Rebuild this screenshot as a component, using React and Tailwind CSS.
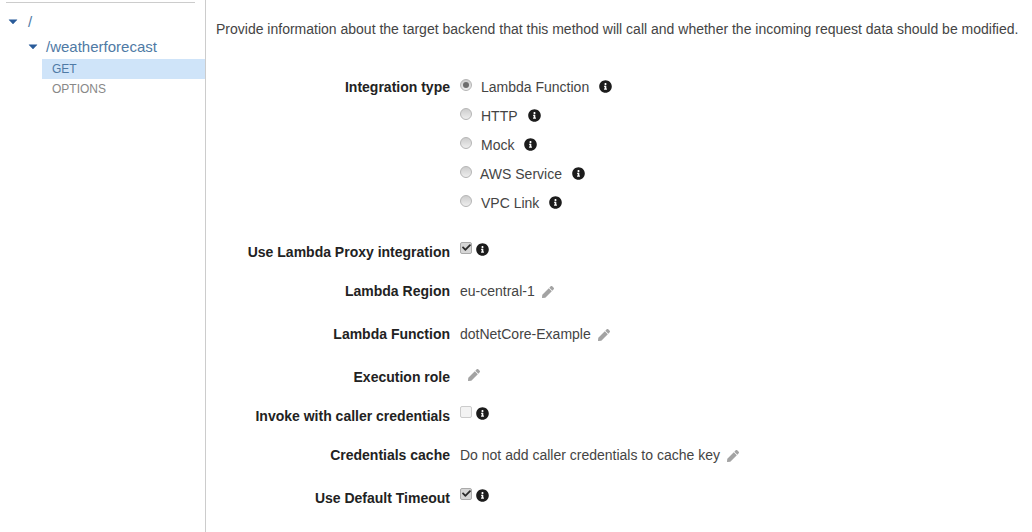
import { FaInfoCircle, FaPen, FaCheck } from "react-icons/fa";

const integrationTypes = [
    { label: "Lambda Function", textMargin: "ml-[9px]" },
    { label: "HTTP", textMargin: "ml-[9px]" },
    { label: "Mock", textMargin: "ml-[9px]" },
    { label: "AWS Service", textMargin: "ml-[8px]" },
    { label: "VPC Link", textMargin: "ml-[9px]" },
];

const Caret = () => (
    <svg width="10" height="6" viewBox="0 0 10 6" className="shrink-0">
        <path d="M1 0.8 H9 L5 5 Z" fill="#2a5c9a" stroke="#2a5c9a" strokeWidth="0.5" strokeLinejoin="round" />
    </svg>
);

const Info = ({ className = "ml-[10px] -mt-[2px]" }) => (
    <FaInfoCircle className={`${className} text-[13px] text-[#1c1c1c] shrink-0`} />
);

const Pencil = ({ className = "ml-[7px]" }) => (
    <FaPen className={`${className} text-[12px] text-[#a3a3a3] shrink-0`} />
);

const Radio = ({ checked }) => (
    <span className="flex items-center justify-center w-3 h-3 -mt-[5px] rounded-full border border-[#b5b5b5] bg-gradient-to-b from-[#cdcdcd] to-[#eeeeee]">
        {checked && <span className="w-[6px] h-[6px] rounded-full bg-[#6e6e6e]" />}
    </span>
);

const Checkbox = ({ checked, className = "-mt-[10px]" }) => (
    <span
        className={`flex items-center justify-center w-3 h-3 rounded-[2px] border ${className} ${
            checked ? "border-[#aaa] bg-[#d6d6d6]" : "border-[#ccc] bg-[#f3f3f3]"
        }`}
    >
        {checked && <FaCheck className="text-[9px] text-[#2b2b2b]" />}
    </span>
);

const Row = ({ label, children }) => (
    <div className="flex items-center h-[29px]">
        <div className="w-[244px] text-right font-bold text-[#222] whitespace-nowrap">{label}</div>
        <div className="flex items-center ml-[10px] text-[#444]">{children}</div>
    </div>
);

const App = () => {
    return (
        <div className="flex w-[1032px] h-[532px] overflow-hidden bg-white font-['Liberation_Sans',Arial,sans-serif] text-[14px]">
            {/* Resource tree */}
            <div className="w-[206px] h-full shrink-0 border-r border-[#ccc]">
                <div className="ml-[6px] mt-[2px] w-[189px] border-t border-[#ccc]" />
                <div className="flex items-center h-[20px] mt-[9px] pl-[8px] text-[15px] text-[#4f7aa5]">
                    <Caret />
                    <span className="ml-[10px]">/</span>
                </div>
                <div className="flex items-center h-[22px] mt-[4px] pl-[28px] text-[15px] text-[#4f7aa5]">
                    <Caret />
                    <span className="ml-2">/weatherforecast</span>
                </div>
                <div className="ml-[42px] mt-[1px] h-5 pl-[10px] flex items-center bg-[#cfe4f9] text-[12px] text-[#4f7aa5]">
                    GET
                </div>
                <div className="ml-[42px] h-5 pl-[10px] flex items-center text-[12px] text-[#888]">OPTIONS</div>
            </div>

            {/* Integration form */}
            <div className="flex-1 min-w-0">
                <p className="ml-[10px] mt-[21px] h-4 leading-4 text-[#444] whitespace-nowrap">
                    Provide information about the target backend that this method will call and whether the incoming
                    request data should be modified.
                </p>

                <div className="mt-[36px] flex items-start">
                    <div className="w-[244px] h-[29px] flex items-center justify-end font-bold text-[#222]">
                        Integration type
                    </div>
                    <div className="ml-[10px]">
                        {integrationTypes.map((type, i) => (
                            <div key={type.label} className="flex items-center h-[29px] text-[#444]">
                                <Radio checked={i === 0} />
                                <span className={type.textMargin}>{type.label}</span>
                                <Info />
                            </div>
                        ))}
                    </div>
                </div>

                <div className="mt-[20px]">
                    <Row label="Use Lambda Proxy integration">
                        <Checkbox checked />
                        <Info className="ml-[4px] -mt-[6px]" />
                    </Row>
                </div>
                <div className="mt-[10px]">
                    <Row label="Lambda Region">
                        eu-central-1
                        <Pencil />
                    </Row>
                </div>
                <div className="mt-[14px]">
                    <Row label="Lambda Function">
                        dotNetCore-Example
                        <Pencil />
                    </Row>
                </div>
                <div className="mt-[14px]">
                    <Row label="Execution role">
                        <Pencil className="ml-2 -mt-[6px]" />
                    </Row>
                </div>
                <div className="mt-[10px]">
                    <Row label="Invoke with caller credentials">
                        <Checkbox />
                        <Info className="ml-[4px] -mt-[6px]" />
                    </Row>
                </div>
                <div className="mt-[10px]">
                    <Row label="Credentials cache">
                        Do not add caller credentials to cache key
                        <Pencil />
                    </Row>
                </div>
                <div className="mt-[14px]">
                    <Row label="Use Default Timeout">
                        <Checkbox checked />
                        <Info className="ml-[4px] -mt-[6px]" />
                    </Row>
                </div>
            </div>
        </div>
    );
};

export default App;
